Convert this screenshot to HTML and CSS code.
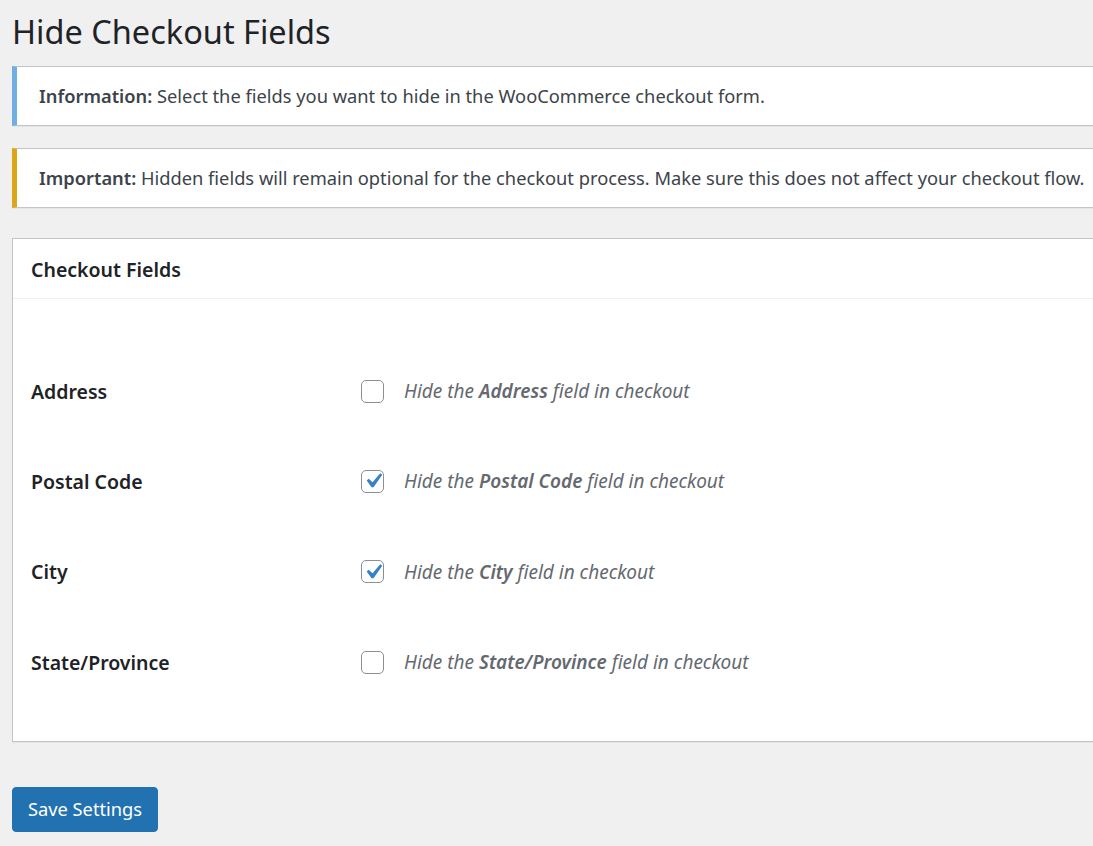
FILE: index.html
```html
<!DOCTYPE html>
<html lang="en">
<head>
<meta charset="utf-8">
<title>Hide Checkout Fields</title>
<link rel="stylesheet" href="styles.css">
</head>
<body>
<div class="wrap">
  <h1 class="page-title">Hide Checkout Fields</h1>

  <div class="notice notice-info">
    <p><strong>Information:</strong> Select the fields you want to hide in the WooCommerce checkout form.</p>
  </div>

  <div class="notice notice-warning">
    <p><strong>Important:</strong> Hidden fields will remain optional for the checkout process. Make sure this does not affect your checkout flow.</p>
  </div>

  <div class="card">
    <h2 class="card-title">Checkout Fields</h2>
    <div class="card-body">
      <div class="field-row">
        <div class="field-label">Address</div>
        <label class="field-control">
          <span class="checkbox"></span>
          <span class="description">Hide the <strong>Address</strong> field in checkout</span>
        </label>
      </div>
      <div class="field-row">
        <div class="field-label">Postal Code</div>
        <label class="field-control">
          <span class="checkbox checked"><svg viewBox="0 0 20 20"><path d="M14.83 4.89l1.34.94-5.81 8.38H9.02L5.78 9.67l1.34-1.25 2.57 2.4z"/></svg></span>
          <span class="description">Hide the <strong>Postal Code</strong> field in checkout</span>
        </label>
      </div>
      <div class="field-row">
        <div class="field-label">City</div>
        <label class="field-control">
          <span class="checkbox checked"><svg viewBox="0 0 20 20"><path d="M14.83 4.89l1.34.94-5.81 8.38H9.02L5.78 9.67l1.34-1.25 2.57 2.4z"/></svg></span>
          <span class="description">Hide the <strong>City</strong> field in checkout</span>
        </label>
      </div>
      <div class="field-row">
        <div class="field-label">State/Province</div>
        <label class="field-control">
          <span class="checkbox"></span>
          <span class="description">Hide the <strong>State/Province</strong> field in checkout</span>
        </label>
      </div>
    </div>
  </div>

  <div class="actions">
    <button class="button-primary" type="button">Save Settings</button>
  </div>
</div>
</body>
</html>
```

FILE: styles.css
```css
html, body {
  margin: 0;
  padding: 0;
  background: #f0f0f1;
  overflow: hidden;
}

body {
  font-family: "Noto Sans", "Open Sans", sans-serif;
  color: #3c434a;
}

.wrap {
  width: 1200px;
  padding-left: 12px;
}

.page-title {
  margin: 0;
  padding: 11px 0 0 0;
  height: 66px;
  box-sizing: border-box;
  font-size: 32.5px;
  font-weight: 400;
  line-height: 42px;
  color: #1d2327;
}

.notice {
  background: #fff;
  border: 1px solid #c3c4c7;
  border-left-width: 5px;
  box-shadow: 0 1px 1px rgba(0,0,0,0.04);
  height: 60px;
  box-sizing: border-box;
  display: flex;
  align-items: center;
  padding-left: 22px;
}

.notice p {
  margin: 0;
  font-size: 18.3px;
  line-height: 24px;
}

.notice strong { font-weight: 600; }

.notice-info { border-left-color: #72aee6; }

.notice-warning {
  border-left-color: #dba617;
  margin-top: 22px;
}

.card {
  margin-top: 30px;
  background: #fff;
  border: 1px solid #c3c4c7;
  box-shadow: 0 1px 1px rgba(0,0,0,0.04);
}

.card-title {
  margin: 0;
  height: 60px;
  box-sizing: border-box;
  padding: 18px 0 0 18px;
  font-size: 19.5px;
  font-weight: 600;
  line-height: 26px;
  color: #1d2327;
  border-bottom: 1px solid #f0f0f1;
}

.card-body {
  padding: 47px 0 34px 18px;
}

.field-row {
  display: flex;
  align-items: center;
  height: 90.3px;
}

.field-label {
  width: 330px;
  font-size: 19.5px;
  font-weight: 600;
  color: #1d2327;
}

.field-control {
  display: flex;
  align-items: center;
  gap: 20px;
}

.checkbox {
  width: 23px;
  height: 23px;
  box-sizing: border-box;
  border: 1px solid #8c8f94;
  border-radius: 5px;
  background: #fff;
  display: flex;
  align-items: center;
  justify-content: center;
  overflow: visible;
}

.checkbox svg {
  flex: none;
  width: 30px;
  height: 30px;
  fill: #3582c4;
}

.description {
  font-size: 19px;
  font-style: italic;
  color: #646970;
}

.description strong { font-weight: 600; }

.actions {
  padding-top: 45px;
}

.button-primary {
  width: 146px;
  height: 45px;
  background: #2271b1;
  border: 1px solid #2271b1;
  border-radius: 4px;
  color: #fff;
  font-family: inherit;
  font-size: 18.3px;
  padding: 0 0 2px 0;
  cursor: pointer;
}
```
